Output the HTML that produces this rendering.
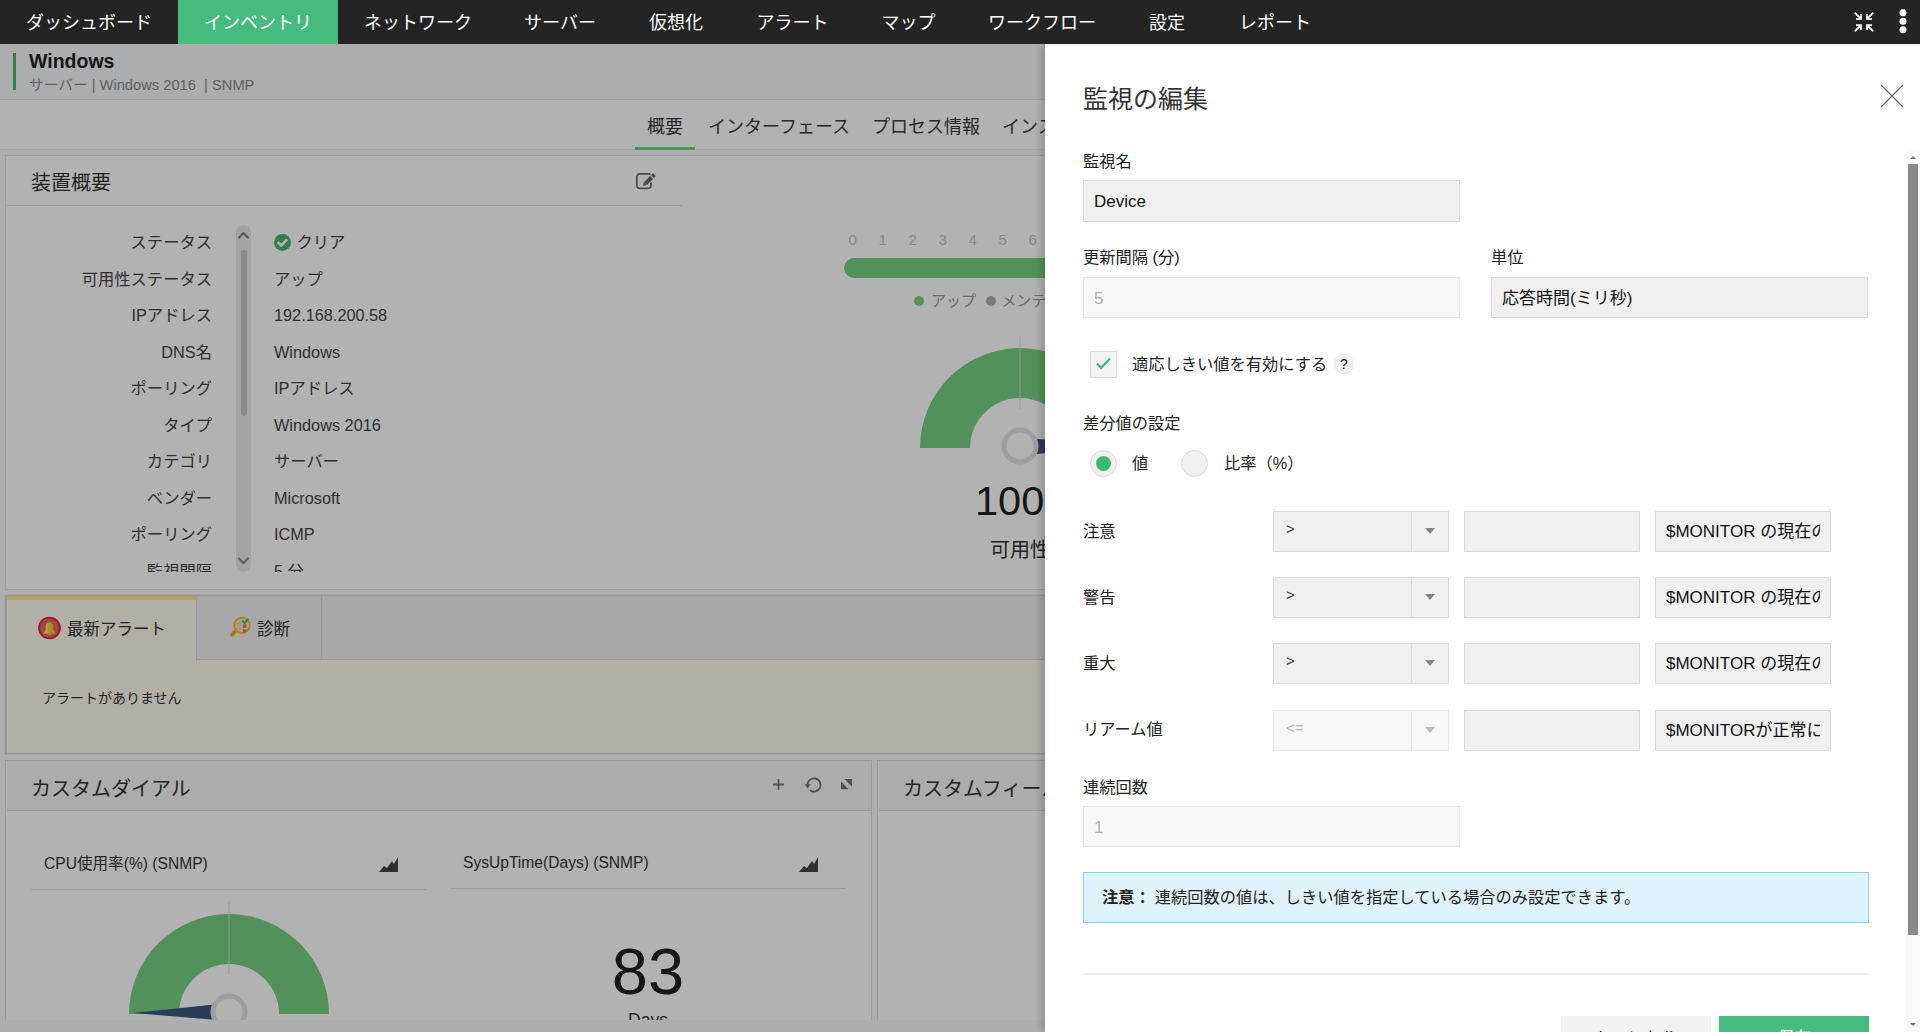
<!DOCTYPE html>
<html lang="ja">
<head>
<meta charset="utf-8">
<title>監視の編集</title>
<style>
*{box-sizing:border-box;margin:0;padding:0}
html,body{width:1920px;height:1032px;overflow:hidden;background:#fff}
body{font-family:"Liberation Sans","Noto Sans CJK JP",sans-serif;color:#222;position:relative;font-size:16px}
.abs{position:absolute;white-space:nowrap}
/* ---------- top nav ---------- */
#nav{position:absolute;left:0;top:0;width:1920px;height:44px;background:#242424;z-index:30}
#nav .it{position:absolute;top:0;height:44px;line-height:46px;color:#fff;font-size:18px;white-space:nowrap;text-align:center}
#nav .act{background:#45bb7e}
/* ---------- page under overlay ---------- */
#page{position:absolute;left:0;top:44px;width:1920px;height:988px;background:#fafafa;overflow:hidden}
#overlay{position:absolute;left:0;top:44px;width:1920px;height:988px;background:rgba(0,0,0,.3);z-index:10}
/* ---------- slide panel ---------- */
#panel{position:absolute;left:1045px;top:44px;width:875px;height:988px;background:#fff;z-index:20;box-shadow:-3px 0 8px rgba(0,0,0,.22);overflow:hidden}
#panel .lbl{position:absolute;font-size:16px;color:#222;white-space:nowrap;line-height:20px}
#panel .inp{position:absolute;height:41px;background:#f0f0f0;border:1px solid #dcdcdc;font-size:17px;line-height:38px;padding-left:10px;color:#111;white-space:nowrap;overflow:hidden}
#panel .inp.dis{background:#f7f7f7;border-color:#e6e6e6;color:#b0b0b0}
</style>
</head>
<body>
<div id="nav">
  <div class="it" style="left:0;width:178px">ダッシュボード</div>
  <div class="it act" style="left:178px;width:160px">インベントリ</div>
  <div class="it" style="left:338px;width:160px">ネットワーク</div>
  <div class="it" style="left:498px;width:124px">サーバー</div>
  <div class="it" style="left:622px;width:108px">仮想化</div>
  <div class="it" style="left:730px;width:125px">アラート</div>
  <div class="it" style="left:855px;width:107px">マップ</div>
  <div class="it" style="left:962px;width:160px">ワークフロー</div>
  <div class="it" style="left:1122px;width:90px">設定</div>
  <div class="it" style="left:1212px;width:126px">レポート</div>
  <svg id="navico" class="abs" style="left:1854px;top:12px" width="20" height="20" viewBox="0 0 20 20" fill="none" stroke="#fff" stroke-width="1.900"><path d="M.600.600l6.300 6.300M2 6.900h4.900V2M19.400.600l-6.300 6.300M18 6.900h-4.900V2M.600 19.400l6.300-6.300M2 13.100h4.900V18M19.400 19.400l-6.300-6.300M18 13.100h-4.900V18"/></svg>
  <svg class="abs" style="left:1898px;top:8px" width="10" height="28" viewBox="0 0 10 28" fill="#fff"><circle cx="5" cy="4.800" r="3.500"/><circle cx="5" cy="13.200" r="3.500"/><circle cx="5" cy="21.800" r="3.500"/></svg>
</div>
<div id="page">
<!--PAGE-->
<style>
#page .hdr{position:absolute;left:0;top:0;width:1920px;height:56px;background:#f7f8fa;border-bottom:1px solid #e9e9e9}
#page .hdr .bar{position:absolute;left:13px;top:9px;width:3px;height:37px;background:#4bb56f}
#page .hdr .t1{position:absolute;left:29px;top:4px;font-size:19.500px;font-weight:bold;color:#222;line-height:26px}
#page .hdr .t2{position:absolute;left:29px;top:31px;font-size:14.700px;color:#8a8a8a;line-height:20px;white-space:nowrap}
#page .tabs{position:absolute;left:0;top:56px;width:1920px;height:50px;background:#fff;border-bottom:1px solid #ececec}
#page .tabs span{position:absolute;top:13px;font-size:18px;line-height:28px;color:#3a3a3a;white-space:nowrap}
#page .tabs i{position:absolute;left:635px;top:47px;width:60px;height:3px;background:#6fd67e}
#page .card{position:absolute;background:#fff;border:1px solid #e2e2e2}
#page .card .o{position:absolute;left:1px;top:0;width:0;height:0}
#page .ctitle{position:absolute;left:24px;font-size:20px;color:#333;white-space:nowrap;line-height:28px}
#page .kv{position:absolute;font-size:16.300px;color:#444;white-space:nowrap;line-height:22px}
#page .kv.k{text-align:right;width:200px;left:5px}
#page .kv.v{left:267px}
</style>
<div class="hdr"><div class="bar"></div><div class="t1">Windows</div><div class="t2">サーバー&nbsp;| Windows 2016&nbsp;&nbsp;| SNMP</div></div>
<div class="tabs">
  <span style="left:647px">概要</span><span style="left:708px">インターフェース</span><span style="left:872px">プロセス情報</span><span style="left:1002px">インストール済みソフトウェア</span><i></i>
</div>
<!-- device summary card : page coords (top = screen y - 44) -->
<div class="card" style="left:5px;top:111px;width:1909px;height:435px"><div class="o">
  <div class="ctitle" style="top:13px">装置概要</div>
  <svg class="abs" style="left:627px;top:15px" width="24" height="20" viewBox="0 0 24 20" fill="none" stroke="#6b6b6b" stroke-width="1.800"><path d="M15.800 2.900H5.800a3 3 0 0 0-3 3v8.500a3 3 0 0 0 3 3H14a3 3 0 0 0 3-3v-2.200" stroke-linecap="round"/><path d="M11.600 12.400l6.100-6.100M18.500 5.500l1.900-1.900" stroke-width="4.200"/><path d="M8.900 15.100l1-4 3 3z" fill="#6b6b6b" stroke="none"/></svg>
  <div class="abs" style="left:0;top:49px;width:675px;height:1px;background:#e0e0e0"></div>
  <div class="kv k" style="top:75px">ステータス</div><div class="kv v" style="top:75px"><svg width="17" height="17" viewBox="0 0 17 17" style="vertical-align:-3px;margin-right:5.500px"><circle cx="8.500" cy="8.500" r="8.500" fill="#4bb56f"/><path d="M4.400 8.800l2.800 2.700 5.200-5.400" fill="none" stroke="#fff" stroke-width="2.600" stroke-linecap="round" stroke-linejoin="round"/></svg>クリア</div>
  <div class="kv k" style="top:112px">可用性ステータス</div><div class="kv v" style="top:112px">アップ</div>
  <div class="kv k" style="top:148px">IPアドレス</div><div class="kv v" style="top:148px">192.168.200.58</div>
  <div class="kv k" style="top:185px">DNS名</div><div class="kv v" style="top:185px">Windows</div>
  <div class="kv k" style="top:221px">ポーリング</div><div class="kv v" style="top:221px">IPアドレス</div>
  <div class="kv k" style="top:258px">タイプ</div><div class="kv v" style="top:258px">Windows 2016</div>
  <div class="kv k" style="top:294px">カテゴリ</div><div class="kv v" style="top:294px">サーバー</div>
  <div class="kv k" style="top:331px">ベンダー</div><div class="kv v" style="top:331px">Microsoft</div>
  <div class="kv k" style="top:367px">ポーリング</div><div class="kv v" style="top:367px">ICMP</div>
  <div class="abs" style="left:100px;top:396px;width:400px;height:20px;overflow:hidden"><div class="kv k" style="top:8px;left:-95px">監視間隔</div><div class="kv v" style="top:8px;left:167px">5 分</div></div>
  <!-- custom scrollbar -->
  <div class="abs" style="left:229px;top:69px;width:15px;height:347px;background:#eaeaea;border-radius:7.500px"></div>
  <div class="abs" style="left:234px;top:94px;width:6px;height:166px;background:#c4c4c4;border-radius:3px"></div>
  <svg class="abs" style="left:229px;top:73px" width="15" height="12" viewBox="0 0 15 12" fill="none" stroke="#808080" stroke-width="2" stroke-linecap="round" stroke-linejoin="round"><path d="M3 8.500l4.500-4.500L12 8.500"/></svg>
  <svg class="abs" style="left:229px;top:399px" width="15" height="12" viewBox="0 0 15 12" fill="none" stroke="#808080" stroke-width="2" stroke-linecap="round" stroke-linejoin="round"><path d="M3 3.500l4.500 4.500L12 3.500"/></svg>
  <!-- availability timeline -->
  <div class="abs" style="left:841.500px;top:74.500px;font-size:15px;color:#c4c4c4">
    <span class="abs" style="left:0">0</span><span class="abs" style="left:30px">1</span><span class="abs" style="left:60px">2</span><span class="abs" style="left:90px">3</span><span class="abs" style="left:120px">4</span><span class="abs" style="left:150px">5</span><span class="abs" style="left:180px">6</span><span class="abs" style="left:210px">7</span><span class="abs" style="left:240px">8</span>
  </div>
  <div class="abs" style="left:837px;top:102px;width:720px;height:20px;border-radius:10px;background:#78d085"></div>
  <div class="abs" style="left:907px;top:135px;font-size:15px;color:#999;line-height:20px"><span style="display:inline-block;width:10px;height:10px;border-radius:5px;background:#78d085;margin-right:7px"></span>アップ <span style="display:inline-block;width:10px;height:10px;border-radius:5px;background:#b0b0b0;margin:0 5px 0 6px"></span>メンテナンス</div>
  <svg class="abs" style="left:903px;top:180px" width="220" height="130" viewBox="0 0 220 130">
    <path d="M10 112A100 100 0 0 1 210 112H160A50 50 0 0 0 60 112Z" fill="#78d085"/>
    <path d="M110 0V73" stroke="#d8d8d8" stroke-width="1"/>
    <path d="M205 109L110 101.500V120Z" fill="#3b5680"/>
    <circle cx="110" cy="110" r="16" fill="#fff" stroke="#e2e2e2" stroke-width="5"/>
  </svg>
  <div class="abs" style="left:968px;top:321px;font-size:41.500px;line-height:48px;color:#222">100</div>
  <div class="abs" style="left:983px;top:381px;font-size:20px;line-height:26px;color:#333">可用性</div>
</div></div>
<!-- alarm tabs -->
<div class="card" style="left:5px;top:551px;width:1909px;height:159px;background:#fffbf0;border-color:#d8d8d8;box-shadow:0 0 0 1px #ececec"><div class="o">
  <div class="abs" style="left:0;top:0;width:1906px;height:64px;background:#f1f1f1;border-bottom:1px solid #dcdcdc"></div>
  <div class="abs" style="left:-1px;top:0;width:191px;height:65px;background:#fffbf0;border-top:4px solid #ffe999;border-right:1px solid #dcdcdc;border-left:1px solid #dcdcdc"></div>
  <div class="abs" style="left:190px;top:0;width:125px;height:64px;border-right:1px solid #dcdcdc"></div>
  <svg class="abs" style="left:31px;top:20px" width="24" height="24" viewBox="0 0 24 24"><circle cx="11.500" cy="12" r="10.400" fill="#e4676f" stroke="#f21d33" stroke-width="1.900"/><path d="M11.500 6.300c-2.400 0-3.700 1.600-3.700 3.800v3.400c0 1.600-1.400 2.600-2.600 3.900h12.600c-1.200-1.300-2.600-2.300-2.600-3.900v-3.400c0-2.200-1.300-3.800-3.700-3.800z" fill="#ffcf1f"/><path d="M10.300 6.700c-1.700.500-2.500 1.800-2.500 3.400v3.400c0 1.600-1.400 2.600-2.600 3.900h4.600z" fill="#ffe27a"/><rect x="10.300" y="17.400" width="2.400" height="1.500" rx=".700" fill="#ffe27a"/></svg>
  <div class="abs" style="left:60px;top:21px;font-size:16.500px;line-height:24px;color:#333">最新アラート</div>
  <svg class="abs" style="left:222px;top:19px" width="24" height="24" viewBox="0 0 24 24"><path d="M5.500 17.200L2.900 19.800" stroke="#ff9f0f" stroke-width="3.600" stroke-linecap="round"/><circle cx="13" cy="10.400" r="7.800" fill="#fbe3c6" stroke="#f5c21f" stroke-width="1.700"/><path d="M7.800 8.400h4.600M7.400 10.800h5M7.800 13.200h4.600" stroke="#f3cda2" stroke-width="1.100"/><rect x="13.900" y="9.400" width="3.500" height="3.300" fill="#f26b78"/><path d="M13.900 14.300h3.500v2.200l-1.800 1.200-1.700.400z" fill="#f26b78"/><path d="M13.800 6.200l1.900 1.700 3.200-3.500" stroke="#35b86b" stroke-width="2" fill="none" stroke-linecap="round"/></svg>
  <div class="abs" style="left:250px;top:21px;font-size:16.500px;line-height:24px;color:#333">診断</div>
  <div class="abs" style="left:35px;top:91px;font-size:14px;line-height:22px;color:#333">アラートがありません</div>
  <div class="abs" style="left:-1px;top:0;width:1px;height:157px;background:#dcdcdc"></div>
</div></div>
<!-- custom dial -->
<div class="card" style="left:5px;top:716px;width:867px;height:300px;border-color:#dedede"><div class="o">
  <div class="abs" style="left:0;top:0;width:864px;height:50px;background:#f6f6f6;border-bottom:1px solid #e0e0e0"></div>
  <div class="ctitle" style="top:13px;font-size:20px;line-height:30px">カスタムダイアル</div>
  <svg class="abs" style="left:765px;top:17px" width="13" height="13" viewBox="0 0 13 13" stroke="#71757a" stroke-width="1.800"><path d="M6.500 1v11M1 6.500h11"/></svg>
  <svg class="abs" style="left:796.700px;top:14.300px" width="20" height="20" viewBox="0 0 20 20" fill="none" stroke="#71757a" stroke-width="1.800"><path d="M3.400 10A6.600 6.600 0 1 1 6 15.200"/><path d="M.600 9.200h6l-3 4.200z" fill="#71757a" stroke="none"/></svg>
  <svg class="abs" style="left:834px;top:18.400px" width="11" height="10.300" viewBox="0 0 12 11" preserveAspectRatio="none" fill="#71757a"><path d="M3.600 0H12v8.200zM0 2.800V11h8.400z"/></svg>
  <div class="abs" style="left:37px;top:92px;font-size:15.600px;line-height:22px;color:#333">CPU使用率(%) (SNMP)</div>
  <svg class="abs" style="left:371px;top:94px" width="22" height="18" viewBox="0 0 22 18" fill="#444"><path d="M1 17l5-6 3 2 5-7 2 3 4-7v15z"/></svg>
  <div class="abs" style="left:24px;top:128px;width:395px;height:1px;background:#e3e3e3"></div>
  <div class="abs" style="left:456px;top:91px;font-size:15.600px;line-height:22px;color:#333">SysUpTime(Days) (SNMP)</div>
  <svg class="abs" style="left:791px;top:94px" width="22" height="18" viewBox="0 0 22 18" fill="#444"><path d="M1 17l5-6 3 2 5-7 2 3 4-7v15z"/></svg>
  <div class="abs" style="left:444px;top:127px;width:395px;height:1px;background:#e3e3e3"></div>
  <div class="abs" style="left:0;top:132px;width:864px;height:128px;overflow:hidden">
    <svg class="abs" style="left:111.500px;top:5.500px" width="220" height="130" viewBox="0 0 220 130">
      <path d="M10 115A100 100 0 0 1 210 115H160A50 50 0 0 0 60 115Z" fill="#78d085"/>
      <path d="M110 2V76" stroke="#d8d8d8" stroke-width="1"/>
      <path d="M14 114L110 104V122Z" fill="#3b5680"/>
      <circle cx="110" cy="113" r="16" fill="#fff" stroke="#e2e2e2" stroke-width="5"/>
    </svg>
    <div class="abs" style="left:541px;top:44px;width:200px;text-align:center;font-size:65px;line-height:70px;color:#222">83</div>
    <div class="abs" style="left:541px;top:115px;width:200px;text-align:center;font-size:17.500px;line-height:24px;color:#333">Days</div>
  </div>
</div></div>
<div class="card" style="left:877px;top:716px;width:1037px;height:300px;border-color:#dedede"><div class="o">
  <div class="abs" style="left:0;top:0;width:1034px;height:50px;background:#f6f6f6;border-bottom:1px solid #e0e0e0"></div>
  <div class="ctitle" style="top:13px;font-size:20px;line-height:30px">カスタムフィールド</div>
</div></div>
<!-- horizontal scrollbar strip -->
<div class="abs" style="left:0;top:976px;width:1920px;height:12px;background:#fafafa"></div>
</div>
<div id="overlay"></div>
<div id="panel">
<!--PANEL-->
<style>
#panel .lbl{font-size:16.250px}
#panel .inp{height:42px;line-height:41px;padding:0 10px}
#panel .inp span{display:block;overflow:hidden;white-space:nowrap}
#panel .sel{position:absolute;width:176px;height:41px;background:#f0f0f0;border:1px solid #dcdcdc;font-size:15px;line-height:34px;padding-left:12px;color:#333}
#panel .sel:after{content:"";position:absolute;left:137px;top:0;width:1px;height:39px;background:#dcdcdc}
#panel .sel i{position:absolute;left:151px;top:16px;width:0;height:0;border-left:5px solid transparent;border-right:5px solid transparent;border-top:6px solid #858585}
#panel .sel.dis{background:#f7f7f7;border-color:#e8e8e8;color:#b5b5b5}
#panel .sel.dis:after{background:#e8e8e8}
#panel .sel.dis i{border-top-color:#bbb}
#panel .rad{position:absolute;width:27px;height:27px;border-radius:14px;background:#f0f0f0;border:1px solid #dcdcdc}
#panel .row .inp{height:41px;line-height:39px}
</style>
<!-- panel coords: x = screen x - 1045, y = screen y - 44 -->
<div class="abs" style="left:38px;top:39px;font-size:25px;line-height:32px;color:#333">監視の編集</div>
<svg class="abs" style="left:835px;top:40px" width="24" height="24" viewBox="0 0 24 24" fill="none" stroke="#666" stroke-width="1.200"><path d="M1 1l22 22M23 1L1 23"/></svg>

<div class="lbl" style="left:38px;top:107px">監視名</div>
<div class="inp" style="left:38px;top:136px;width:377px">Device</div>

<div class="lbl" style="left:38px;top:203px">更新間隔 (分)</div>
<div class="inp dis" style="left:38px;top:233px;width:377px;height:41px">5</div>
<div class="lbl" style="left:446px;top:203px">単位</div>
<div class="inp" style="left:446px;top:233px;width:377px;height:41px">応答時間(ミリ秒)</div>

<div class="abs" style="left:45px;top:307px;width:27px;height:27px;background:#f3f3f3;border:1px solid #dcdcdc"></div>
<svg class="abs" style="left:51px;top:313px" width="15" height="13" viewBox="0 0 15 13" fill="none" stroke="#3cb878" stroke-width="2.200"><path d="M1 6.500l4.200 4.300L14 1.500"/></svg>
<div class="lbl" style="left:87px;top:309.500px">適応しきい値を有効にする</div>
<div class="abs" style="left:289px;top:310px;width:20px;height:20px;border-radius:10px;background:#f1f1f1;border:1px solid #e6e6e6;font-size:14px;line-height:18px;text-align:center;color:#111">?</div>

<div class="lbl" style="left:38px;top:369px">差分値の設定</div>
<div class="rad" style="left:45px;top:406px"></div>
<div class="abs" style="left:51px;top:412px;width:15px;height:15px;border-radius:8px;background:#3cb878"></div>
<div class="lbl" style="left:87px;top:409px">値</div>
<div class="rad" style="left:136px;top:406px"></div>
<div class="lbl" style="left:179px;top:409px">比率（%）</div>

<div class="row">
<div class="lbl" style="left:38px;top:477px">注意</div>
<div class="sel" style="left:228px;top:467px">&gt;<i></i></div>
<div class="inp" style="left:419px;top:467px;width:176px"></div>
<div class="inp" style="left:610px;top:467px;width:176px"><span>$MONITOR の現在の値は $CURRENTVALUE</span></div>

<div class="lbl" style="left:38px;top:543px">警告</div>
<div class="sel" style="left:228px;top:533px">&gt;<i></i></div>
<div class="inp" style="left:419px;top:533px;width:176px"></div>
<div class="inp" style="left:610px;top:533px;width:176px"><span>$MONITOR の現在の値は $CURRENTVALUE</span></div>

<div class="lbl" style="left:38px;top:609px">重大</div>
<div class="sel" style="left:228px;top:599px">&gt;<i></i></div>
<div class="inp" style="left:419px;top:599px;width:176px"></div>
<div class="inp" style="left:610px;top:599px;width:176px"><span>$MONITOR の現在の値は $CURRENTVALUE</span></div>

<div class="lbl" style="left:38px;top:675px">リアーム値</div>
<div class="sel dis" style="left:228px;top:666px">&lt;=<i></i></div>
<div class="inp" style="left:419px;top:666px;width:176px"></div>
<div class="inp" style="left:610px;top:666px;width:176px"><span>$MONITORが正常に戻りました</span></div>
</div>

<div class="lbl" style="left:38px;top:733px">連続回数</div>
<div class="inp dis" style="left:38px;top:762px;width:377px;height:41px">1</div>

<div class="abs" style="left:38px;top:828px;width:786px;height:51px;background:#dff3fd;border:1px solid #86d3f3;font-size:16.250px;line-height:49px;padding-left:18px;color:#222"><b style="margin-right:4px">注意：</b>連続回数の値は、しきい値を指定している場合のみ設定できます。</div>

<div class="abs" style="left:38px;top:929px;width:786px;height:2px;background:#eee"></div>
<div class="abs" style="left:516px;top:972px;width:150px;height:46px;background:#f2f2f2;text-align:center;font-size:17px;line-height:46px;color:#111">キャンセル</div>
<div class="abs" style="left:674px;top:972px;width:150px;height:46px;background:#45bb7e;text-align:center;font-size:17px;line-height:46px;color:#fff">保存</div>

<!-- native-like scrollbar -->
<div class="abs" style="left:861px;top:106px;width:14px;height:882px;background:#fafafa"></div>
<div class="abs" style="left:863px;top:120px;width:10px;height:771px;background:#898989"></div>
<div class="abs" style="left:865px;top:112px;width:0;height:0;border-left:3px solid transparent;border-right:3px solid transparent;border-bottom:3px solid #777"></div>
<div class="abs" style="left:865px;top:979px;width:0;height:0;border-left:3px solid transparent;border-right:3px solid transparent;border-top:3px solid #777"></div>
</div>
</body>
</html>
